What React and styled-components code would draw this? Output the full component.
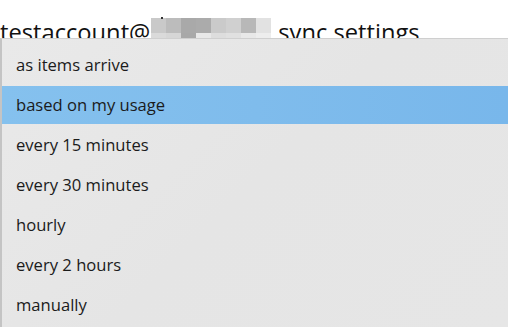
import React from "react";
import styled, { createGlobalStyle } from "styled-components";

const Global = createGlobalStyle`
  html, body { margin: 0; padding: 0; background: #ffffff; }
  body { font-family: "Open Sans", "Noto Sans", sans-serif; overflow: hidden; }
`;

const Page = styled.div`
  position: relative;
  width: 508px;
  height: 327px;
  overflow: hidden;
  background: #ffffff;
`;

const Header = styled.div`
  display: flex;
  align-items: flex-end;
  height: 38px;
  font-size: 23.7px;
  line-height: 1;
  color: #111;
  white-space: nowrap;
  box-sizing: border-box;
`;

const HeaderText = styled.span`
  display: block;
  transform: translateY(${(p) => p.$shift || 0}px);
`;

const Mosaic = styled.div`
  display: grid;
  grid-template-columns: repeat(8, 15px);
  grid-template-rows: 15px 5px;
  margin: 0 7px 0 1px;
  align-self: flex-end;
  position: relative;
`;

const Cell = styled.div`
  background: ${(p) => p.$c};
`;

const Dot = styled.div`
  position: absolute;
  left: 10px;
  top: -1px;
  width: 2px;
  height: 2px;
  background: #333;
`;

const Menu = styled.ul`
  position: absolute;
  left: 0;
  top: 38px;
  right: 0;
  bottom: 0;
  margin: 0;
  padding: 7px 0 0 0;
  list-style: none;
  background: linear-gradient(135deg, #e9e9e9 0%, #e5e5e5 50%, #e6e6e6 100%);
  border-top: 1px solid #cfcfcf;
  border-left: 2px solid #c4c4c4;
  box-sizing: border-box;
`;

const Item = styled.li`
  height: 40px;
  box-sizing: border-box;
  padding-bottom: ${(p) => (p.$selected ? "2px" : "0")};
`;

const ItemFill = styled.div`
  height: 100%;
  display: flex;
  align-items: center;
  padding: 0 0 ${(p) => (p.$selected ? "1px" : "3px")} 14px;
  box-sizing: border-box;
  font-size: 16.6px;
  color: #1b1b1b;
  background: ${(p) =>
    p.$selected
      ? "linear-gradient(90deg, #85c1ee 0%, #7fbcec 50%, #78b7eb 100%)"
      : "transparent"};
`;

const topRow = ["#c9c9c9", "#bcbcbc", "#a9a9a9", "#ababab", "#cacaca", "#d0d0d0", "#b8b8b8", "#e2e2e2"];
const bottomRow = ["#dadada", "#d6d6d6", "#a8a8a8", "#e8e8e8", "#dddddd", "#e0e0e0", "#e8e8e8", "#ededed"];

const items = [
  "as items arrive",
  "based on my usage",
  "every 15 minutes",
  "every 30 minutes",
  "hourly",
  "every 2 hours",
  "manually",
];

export default function App() {
  return (
    <Page>
      <Global />
      <Header>
        <HeaderText $shift={7}>testaccount@</HeaderText>
        <Mosaic>
          {topRow.map((c, i) => (
            <Cell key={"t" + i} $c={c} />
          ))}
          {bottomRow.map((c, i) => (
            <Cell key={"b" + i} $c={c} />
          ))}
          <Dot />
        </Mosaic>
        <HeaderText $shift={7}>sync settings</HeaderText>
      </Header>
      <Menu>
        {items.map((t, i) => (
          <Item key={t} $selected={i === 1}>
            <ItemFill $selected={i === 1}>{t}</ItemFill>
          </Item>
        ))}
      </Menu>
    </Page>
  );
}
